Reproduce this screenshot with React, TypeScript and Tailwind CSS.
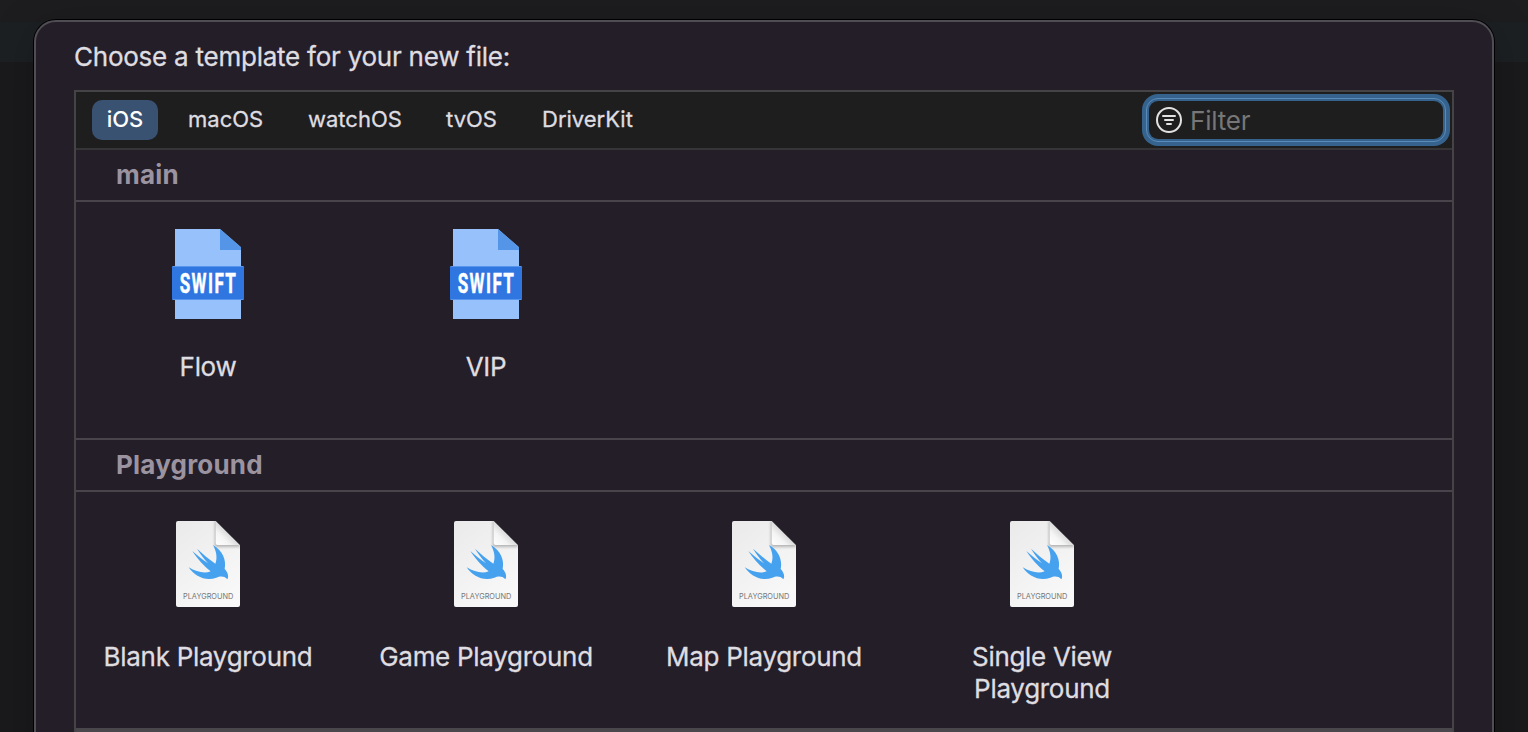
import React from "react";

const tabs = [
  { label: "macOS", cls: "ml-[30px] w-[76px]" },
  { label: "watchOS", cls: "ml-[44px] w-[94px]" },
  { label: "tvOS", cls: "ml-[44px] w-[52px]" },
  { label: "DriverKit", cls: "ml-[44px] w-[93px]" },
];

function SwiftFileIcon() {
  return (
    <svg width="96" height="110" viewBox="0 0 288 330" className="block">
      <path d="M45 27H180L243 82V297H45Z" fill="#97c1fa" />
      <path d="M180 27L243 82V90H180Z" fill="#5495e7" />
      <rect x="36" y="138" width="216" height="102" rx="4" fill="#5796ec" />
      <rect x="36" y="141" width="216" height="96" fill="#2f76e1" />
      <text
        transform="translate(59 219) scale(0.61 1)"
        fontSize="84"
        fontWeight="700"
        fontFamily="Roboto, sans-serif"
        fill="#fff"
        stroke="#fff"
        strokeWidth="1.5"
        letterSpacing="7"
      >
        SWIFT
      </text>
    </svg>
  );
}

function PlaygroundIcon() {
  return (
    <svg width="86" height="105" viewBox="0 0 258 315" className="block">
      <defs>
        <linearGradient id="page" x1="0" y1="0" x2="0.6" y2="1">
          <stop offset="0" stopColor="#eaeaea" />
          <stop offset="1" stopColor="#f8f8f8" />
        </linearGradient>
        <linearGradient id="fold" x1="1" y1="0" x2="0" y2="1">
          <stop offset="0.45" stopColor="#d4d4d4" />
          <stop offset="0.7" stopColor="#f4f4f4" />
          <stop offset="1" stopColor="#ffffff" />
        </linearGradient>
        <filter id="soft" x="-20%" y="-20%" width="140%" height="140%">
          <feGaussianBlur stdDeviation="5" />
        </filter>
        <clipPath id="sheet">
          <path d="M39 33H152L225 106V285Q225 291 219 291H39Q33 291 33 285V39Q33 33 39 33Z" />
        </clipPath>
      </defs>
      <g clipPath="url(#sheet)">
        <rect x="33" y="33" width="192" height="258" fill="url(#page)" />
        <path d="M150 28V110H230Z" fill="#777" opacity="0.55" filter="url(#soft)" />
        <path d="M152 33L225 105H158Q152 105 152 99Z" fill="url(#fold)" />
      </g>
      <path
        d="M144 105C172 121 185 149 179 177C189 188 192 199 187 208C177 196 164 199 154 203C122 216 89 198 71 172C94 186 119 192 137 184C117 168 96 145 82 123C97 136 113 149 129 160C117 147 105 130 96 116C114 132 132 148 151 161C158 143 154 124 144 105Z"
        fill="#46a1ef"
      />
      <text
        x="54"
        y="268"
        fontSize="22.5"
        fontFamily="Inter, sans-serif"
        fill="#777"
        textLength="151"
        lengthAdjust="spacingAndGlyphs"
      >
        PLAYGROUND
      </text>
    </svg>
  );
}

function SectionHeader({ title }: { title: string }) {
  return (
    <div className="flex h-[52px] items-center border-b-2 border-[#49444c] pl-10 text-[26px] leading-[50px] font-bold tracking-[0.2px] text-[#9b94a0]">
      {title}
    </div>
  );
}

function Template({ icon, label }: { icon: React.ReactNode; label: React.ReactNode }) {
  return (
    <div className="flex w-[238px] flex-col items-center">
      <div className="flex h-[131px] justify-center">{icon}</div>
      <div className="text-center text-[26px] leading-8 tracking-[-0.3px] whitespace-nowrap [-webkit-text-stroke:0.3px]">
        {label}
      </div>
    </div>
  );
}

export default function App() {
  return (
    <div className="relative h-[732px] w-[1528px] overflow-hidden bg-[#1a1a1c] font-['Inter',sans-serif] text-[#dfdde0]">
      <div className="h-[22px] bg-[#1d1d20]" />
      <div className="h-10 bg-[#1d2023]" />
      <div className="absolute top-5 left-[34px] h-[760px] w-[1460px] rounded-[22px] border-2 border-[#514d54] bg-[#241e28] px-[38px] shadow-[0_0_0_1px_#000,0_8px_45px_rgba(0,0,0,0.22)]">
        <h1 className="h-[68px] pt-[15px] text-[26px] leading-10 font-normal tracking-[-0.24px] whitespace-nowrap [-webkit-text-stroke:0.3px]">
          Choose a template for your new file:
        </h1>
        <div className="h-[642px] w-[1380px] border-2 border-[#454346]">
          <div className="flex h-[58px] items-start border-b-2 border-[#363437] bg-[#1e1e1e] pt-2 pl-4 text-[22px] leading-[39px]">
            <div className="h-10 w-[66px] rounded-[10px] bg-[#3a5272] text-center font-medium text-white">iOS</div>
            {tabs.map((t) => (
              <div key={t.label} className={"whitespace-nowrap [-webkit-text-stroke:0.3px] " + t.cls}>
                {t.label}
              </div>
            ))}
            <div className="-mt-[6px] mr-[2px] ml-auto h-[52px] w-[308px] rounded-[16px] bg-[#35638e] p-1">
              <div className="h-11 rounded-[12px] border border-[#5b8bb9] bg-[#35638e] p-[2px]">
                <div className="flex h-[38px] items-center rounded-[9px] bg-[#1e1e1e] pl-[7px]">
                  <svg width="26" height="26" viewBox="0 0 26 26" fill="none" stroke="#e2e2e2" strokeWidth="2" strokeLinecap="round">
                    <circle cx="13" cy="13" r="12" />
                    <path d="M7 9H19M9 13H17M11 17H15" />
                  </svg>
                  <span className="ml-2 pt-[2px] text-[26px] leading-[36px] tracking-[-0.2px] text-[#777]">Filter</span>
                </div>
              </div>
            </div>
          </div>
          <SectionHeader title="main" />
          <div className="flex h-[238px] gap-10 border-b-2 border-[#49444c] pt-[18px] pl-[13px]">
            <Template icon={<SwiftFileIcon />} label="Flow" />
            <Template icon={<SwiftFileIcon />} label="VIP" />
          </div>
          <SectionHeader title="Playground" />
          <div className="flex h-[240px] gap-10 border-b-4 border-[#49464c] pt-[18px] pl-[13px]">
            <Template icon={<PlaygroundIcon />} label="Blank Playground" />
            <Template icon={<PlaygroundIcon />} label="Game Playground" />
            <Template icon={<PlaygroundIcon />} label="Map Playground" />
            <Template icon={<PlaygroundIcon />} label={<>Single View<br />Playground</>} />
          </div>
        </div>
      </div>
    </div>
  );
}
